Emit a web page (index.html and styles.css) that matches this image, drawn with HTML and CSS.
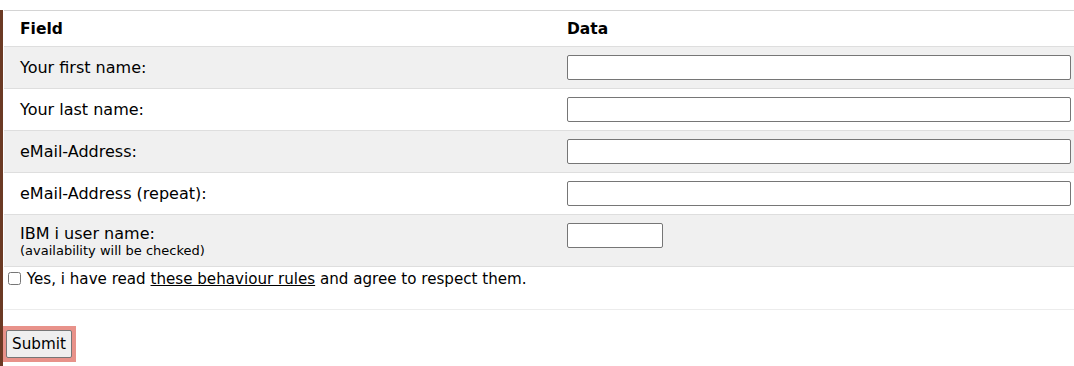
FILE: index.html
```html
<!DOCTYPE html>
<html>
<head>
<meta charset="utf-8">
<link rel="stylesheet" href="styles.css">
</head>
<body>
<div class="page">
  <form class="reg">
    <table class="fields">
      <thead>
        <tr><th class="c1">Field</th><th class="c2">Data</th></tr>
      </thead>
      <tbody>
        <tr class="odd"><td class="c1">Your first name:</td><td class="c2"><input type="text" class="wide"></td></tr>
        <tr><td class="c1">Your last name:</td><td class="c2"><input type="text" class="wide"></td></tr>
        <tr class="odd"><td class="c1">eMail-Address:</td><td class="c2"><input type="text" class="wide"></td></tr>
        <tr><td class="c1">eMail-Address (repeat):</td><td class="c2"><input type="text" class="wide"></td></tr>
        <tr class="odd"><td class="c1 multi">IBM i user name:<span class="hint">(availability will be checked)</span></td><td class="c2"><input type="text" class="short"></td></tr>
        <tr class="agree"><td colspan="2"><label><input type="checkbox" class="chk"> Yes, i have read <a href="#" class="rules">these behaviour rules</a> and agree to respect them.</label></td></tr>
      </tbody>
    </table>
    <div class="submit-wrap"><button type="button" class="submit">Submit</button></div>
  </form>
</div>
</body>
</html>
```
FILE: styles.css
```css
html, body {
  margin: 0;
  padding: 0;
  background: #fff;
}
body {
  font-family: "DejaVu Sans", Verdana, sans-serif;
  font-size: 16px;
  color: #000;
}
.page {
  border-left: 3px solid #6b3a24;
  min-height: 366px;
  padding-left: 1px;
  box-sizing: border-box;
}
.reg {
  margin: 0;
}
.fields {
  margin-top: 10px;
  width: 1070px;
  border-collapse: collapse;
  border-top: 1px solid #d4d4d4;
}
.fields th,
.fields td {
  text-align: left;
  vertical-align: top;
  padding: 8px 3px 8px 16px;
  border-bottom: 1px solid #dedede;
  line-height: 18px;
}
.fields th {
  font-weight: bold;
  font-size: 15.5px;
  padding-top: 9px;
  padding-bottom: 8px;
}
.fields td.c1 {
  line-height: 25px;
}
.fields th.c1,
.fields td.c1 {
  width: 528px;
}
.odd td {
  background: #f0f0f0;
}
.fields td.multi {
  line-height: 18px;
  padding-top: 10px;
  padding-bottom: 8px;
}
.hint {
  font-size: 13px;
  line-height: 15px;
  display: block;
}
.wide,
.short {
  box-sizing: border-box;
  height: 25px;
  margin: 0;
  border: 1px solid #767676;
  border-radius: 2px;
  display: block;
  font-size: 13px;
}
.wide {
  width: 504px;
}
.short {
  width: 96px;
}
.fields tr.agree td {
  padding: 2px 0 0 0;
  height: 40px;
  border-bottom: 1px solid #ececec;
  line-height: 20px;
  font-size: 15.12px;
}
.chk {
  margin: 3px 1px 3px 4px;
  width: 13px;
  height: 13px;
  vertical-align: -1px;
}
.rules {
  color: #000;
  text-decoration: underline;
}
.submit-wrap {
  display: inline-block;
  background: #e8928a;
  padding: 4px 4px 4px 3px;
  margin-top: 16px;
  margin-left: -1px;
}
.submit {
  display: block;
  font-family: "DejaVu Sans", Verdana, sans-serif;
  font-size: 15.2px;
  height: 28px;
  padding: 1px 5px;
  background: #efefef;
  border: 1px solid #767676;
  border-radius: 2px;
  color: #000;
}
```
